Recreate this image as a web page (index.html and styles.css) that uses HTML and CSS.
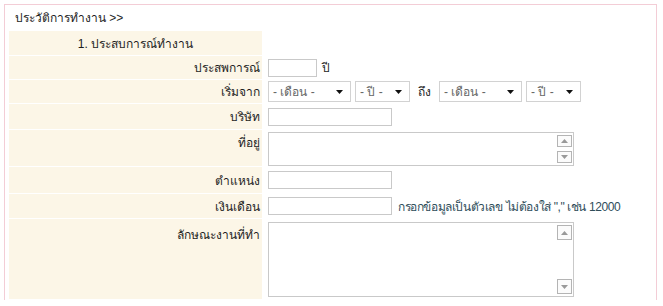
FILE: index.html
```html
<!DOCTYPE html>
<html lang="th">
<head>
<meta charset="utf-8">
<title>ประวัติการทำงาน</title>
<link rel="stylesheet" href="styles.css">
</head>
<body>
<div class="box">
  <div class="form">
    <div class="head">ประวัติการทำงาน &gt;&gt;</div>

    <div class="label section r1">1. ประสบการณ์ทำงาน</div>
    <div class="data r1"></div>

    <div class="label r2">ประสพการณ์</div>
    <div class="data r2"><span class="input w-s"></span><span class="unit">ปี</span></div>

    <div class="label r3">เริ่มจาก</div>
    <div class="data r3">
      <span class="select w-m"><span class="opt">- เดือน -</span><svg class="arrow" width="7" height="4" viewBox="0 0 7 4"><path d="M0 0H7L3.5 4Z" fill="#111"/></svg></span>
      <span class="select w-y"><span class="opt">- ปี -</span><svg class="arrow" width="7" height="4" viewBox="0 0 7 4"><path d="M0 0H7L3.5 4Z" fill="#111"/></svg></span>
      <span class="to">ถึง</span>
      <span class="select w-m"><span class="opt">- เดือน -</span><svg class="arrow" width="7" height="4" viewBox="0 0 7 4"><path d="M0 0H7L3.5 4Z" fill="#111"/></svg></span>
      <span class="select w-y"><span class="opt">- ปี -</span><svg class="arrow" width="7" height="4" viewBox="0 0 7 4"><path d="M0 0H7L3.5 4Z" fill="#111"/></svg></span>
    </div>

    <div class="label r4">บริษัท</div>
    <div class="data r4"><span class="input w-l"></span></div>

    <div class="label top r5">ที่อยู่</div>
    <div class="data top r5">
      <div class="textarea ta-s">
        <div class="ta-body"></div>
        <div class="sbar">
          <span class="sbtn"><svg width="7" height="4" viewBox="0 0 7 4"><path d="M0 4H7L3.5 0Z" fill="#999"/></svg></span>
          <span class="sbtn"><svg width="7" height="4" viewBox="0 0 7 4"><path d="M0 0H7L3.5 4Z" fill="#999"/></svg></span>
        </div>
      </div>
    </div>

    <div class="label r6">ตำแหน่ง</div>
    <div class="data r6"><span class="input w-l"></span></div>

    <div class="label r7">เงินเดือน</div>
    <div class="data r7"><span class="input w-l"></span><span class="hint">กรอกข้อมูลเป็นตัวเลข ไม่ต้องใส่ "," เช่น 12000</span></div>

    <div class="label top r8">ลักษณะงานที่ทำ</div>
    <div class="data top r8">
      <div class="textarea ta-l">
        <div class="ta-body"></div>
        <div class="sbar">
          <span class="sbtn"><svg width="7" height="4" viewBox="0 0 7 4"><path d="M0 4H7L3.5 0Z" fill="#999"/></svg></span>
          <span class="sbtn"><svg width="7" height="4" viewBox="0 0 7 4"><path d="M0 0H7L3.5 4Z" fill="#999"/></svg></span>
        </div>
      </div>
    </div>
  </div>
</div>
</body>
</html>
```

FILE: styles.css
```css
html, body {
  margin: 0;
  padding: 0;
  background: #ffffff;
}
body {
  font-family: Tahoma, "Liberation Sans", sans-serif;
  font-size: 12px;
  color: #1e1e1e;
}
.box {
  margin: 4px 6px 0 4px;
  border: 1px solid #f3cdd6;
  border-bottom: none;
  padding: 0 4px;
  height: 296px;
  box-sizing: border-box;
}
.form {
  display: grid;
  grid-template-columns: 253px 1fr;
  grid-template-rows: 25px 24px 23px 23px 25px 36px 26px 24px 80px;
  row-gap: 1px;
  column-gap: 1px;
}
.head {
  grid-column: 1 / 3;
  display: flex;
  align-items: center;
  padding-left: 6px;
}
.label {
  background: #fcf6e7;
  display: flex;
  align-items: center;
  justify-content: flex-end;
  padding-right: 2px;
}
.label.section {
  justify-content: center;
  padding-right: 0;
}
.label.top {
  align-items: flex-start;
  padding-top: 3px;
}
.r8.label { padding-top: 6px; }
.data {
  display: flex;
  align-items: center;
  padding-left: 5px;
}
.data.top {
  align-items: flex-start;
  padding-top: 2px;
}
.r8.data { padding-top: 3px; }
.input {
  display: block;
  height: 18px;
  border: 1px solid #c9c9c9;
  background: #ffffff;
  box-sizing: border-box;
}
.w-s { width: 49px; }
.w-l { width: 124px; }
.unit { margin-left: 5px; }
.select {
  display: flex;
  align-items: center;
  justify-content: space-between;
  height: 21px;
  box-sizing: border-box;
  border: 1px solid #d2d2d2;
  background: #ffffff;
  padding: 0 7px 0 4px;
  color: #666666;
  margin-right: 4px;
}
.w-m { width: 83px; }
.w-y { width: 55px; }
.to {
  margin: 0 8px 0 4px;
}
.hint {
  margin-left: 6px;
  color: #2f4d5a;
  letter-spacing: -0.4px;
}
.textarea {
  display: flex;
  width: 306px;
  box-sizing: border-box;
  border: 1px solid #c9c9c9;
  background: #ffffff;
}
.ta-s { height: 34px; }
.ta-l { height: 75px; }
.ta-body { flex: 1; }
.sbar {
  display: flex;
  flex-direction: column;
  justify-content: space-between;
  padding: 2px 1px 2px 0;
}
.sbtn {
  display: flex;
  align-items: center;
  justify-content: center;
  width: 15px;
  box-sizing: border-box;
  border: 1px solid #b4b4b4;
  background: #fbfbfb;
}
.ta-s .sbtn { height: 12px; }
.ta-l .sbtn { height: 15px; }
```
